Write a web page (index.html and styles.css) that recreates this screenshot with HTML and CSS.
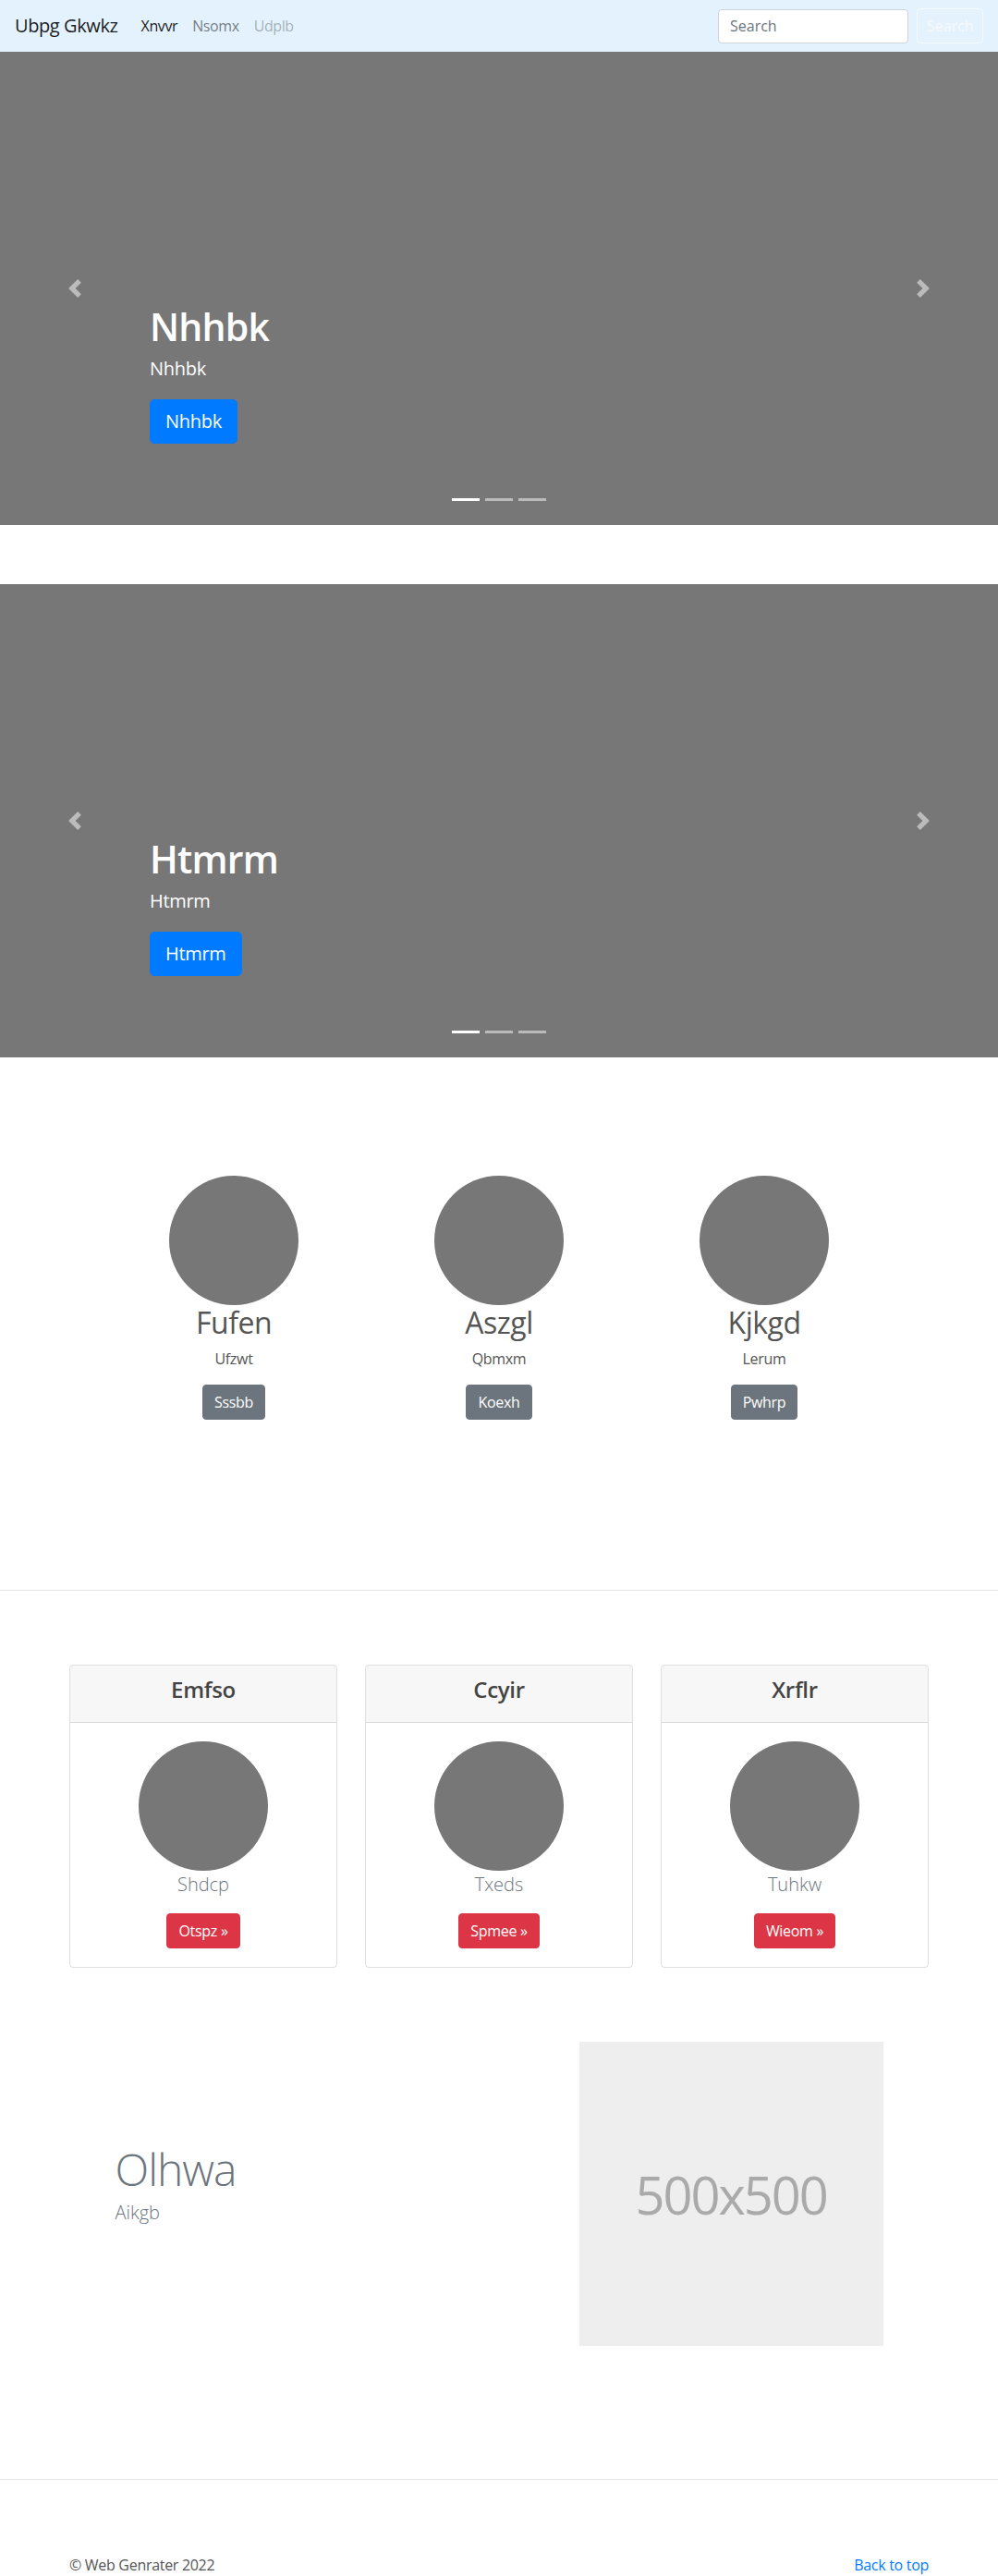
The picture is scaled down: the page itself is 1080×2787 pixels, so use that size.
FILE: index.html
```html
<!DOCTYPE html>
<html lang="en">
<head>
<meta charset="utf-8">
<title>Ubpg Gkwkz</title>
<link rel="stylesheet" href="styles.css">
</head>
<body>
<nav class="navbar">
  <a class="brand" href="#">Ubpg Gkwkz</a>
  <ul class="nav">
    <li><a class="nav-link active" href="#">Xnvvr</a></li>
    <li><a class="nav-link" href="#">Nsomx</a></li>
    <li><a class="nav-link disabled" href="#">Udplb</a></li>
  </ul>
  <form class="search">
    <input class="search-input" type="text" placeholder="Search">
    <button class="search-btn" type="button">Search</button>
  </form>
</nav>

<div class="carousel carousel-first">
  <div class="caption">
    <h1 class="caption-title">Nhhbk</h1>
    <p class="lead caption-lead">Nhhbk</p>
    <a class="btn btn-lg btn-primary" href="#">Nhhbk</a>
  </div>
  <a class="control control-prev" href="#"><svg viewBox="0 0 8 8" width="20" height="20"><path d="M5.25 0l-4 4 4 4 1.5-1.5-2.5-2.5 2.5-2.5-1.5-1.5z"/></svg></a>
  <a class="control control-next" href="#"><svg viewBox="0 0 8 8" width="20" height="20"><path d="M2.75 0l-1.5 1.5 2.5 2.5-2.5 2.5 1.5 1.5 4-4-4-4z"/></svg></a>
  <ol class="indicators"><li class="active"></li><li></li><li></li></ol>
</div>

<div class="carousel carousel-second">
  <div class="caption">
    <h1 class="caption-title">Htmrm</h1>
    <p class="lead caption-lead">Htmrm</p>
    <a class="btn btn-lg btn-primary" href="#">Htmrm</a>
  </div>
  <a class="control control-prev" href="#"><svg viewBox="0 0 8 8" width="20" height="20"><path d="M5.25 0l-4 4 4 4 1.5-1.5-2.5-2.5 2.5-2.5-1.5-1.5z"/></svg></a>
  <a class="control control-next" href="#"><svg viewBox="0 0 8 8" width="20" height="20"><path d="M2.75 0l-1.5 1.5 2.5 2.5-2.5 2.5 1.5 1.5 4-4-4-4z"/></svg></a>
  <ol class="indicators"><li class="active"></li><li></li><li></li></ol>
</div>

<section class="marketing">
  <div class="marketing-col">
    <div class="avatar"></div>
    <h2 class="marketing-title">Fufen</h2>
    <p class="marketing-text">Ufzwt</p>
    <a class="btn btn-secondary" href="#">Sssbb</a>
  </div>
  <div class="marketing-col">
    <div class="avatar"></div>
    <h2 class="marketing-title">Aszgl</h2>
    <p class="marketing-text">Qbmxm</p>
    <a class="btn btn-secondary" href="#">Koexh</a>
  </div>
  <div class="marketing-col">
    <div class="avatar"></div>
    <h2 class="marketing-title">Kjkgd</h2>
    <p class="marketing-text">Lerum</p>
    <a class="btn btn-secondary" href="#">Pwhrp</a>
  </div>
</section>

<hr class="divider divider-top">

<section class="cards">
  <div class="card">
    <div class="card-header"><h4 class="card-title">Emfso</h4></div>
    <div class="card-body">
      <div class="avatar"></div>
      <p class="lead card-lead">Shdcp</p>
      <a class="btn btn-danger" href="#">Otspz &raquo;</a>
    </div>
  </div>
  <div class="card">
    <div class="card-header"><h4 class="card-title">Ccyir</h4></div>
    <div class="card-body">
      <div class="avatar"></div>
      <p class="lead card-lead">Txeds</p>
      <a class="btn btn-danger" href="#">Spmee &raquo;</a>
    </div>
  </div>
  <div class="card">
    <div class="card-header"><h4 class="card-title">Xrflr</h4></div>
    <div class="card-body">
      <div class="avatar"></div>
      <p class="lead card-lead">Tuhkw</p>
      <a class="btn btn-danger" href="#">Wieom &raquo;</a>
    </div>
  </div>
</section>

<section class="featurette">
  <div class="featurette-text">
    <h2 class="featurette-heading">Olhwa</h2>
    <p class="lead featurette-lead">Aikgb</p>
  </div>
  <div class="featurette-media">
    <div class="placeholder"><span>500x500</span></div>
  </div>
</section>

<hr class="divider divider-bottom">

<footer class="footer">
  <p class="copyright">&copy; Web Genrater 2022</p>
  <p class="back"><a href="#">Back to top</a></p>
</footer>
</body>
</html>
```

FILE: styles.css
```css
* { box-sizing: border-box; }

html, body {
  margin: 0;
  padding: 0;
}

body {
  font-family: "Open Sans", "Noto Sans", sans-serif;
  font-size: 16px;
  line-height: 1.5;
  color: #212529;
  background: #fff;
}

a { text-decoration: none; }

/* Navbar */
.navbar {
  display: flex;
  align-items: center;
  height: 56px;
  padding: 0 16px;
  background: #e3f2fd;
}

.brand {
  font-size: 20px;
  line-height: 30px;
  color: rgba(0, 0, 0, 0.9);
  margin-right: 17px;
  letter-spacing: -0.4px;
}

.nav {
  display: flex;
  list-style: none;
  margin: 0;
  padding: 0;
}

.nav-link {
  display: block;
  padding: 8px 8px;
  font-size: 16px;
  letter-spacing: -0.4px;
  color: rgba(0, 0, 0, 0.5);
}

.nav-link.active { color: rgba(0, 0, 0, 0.9); }
.nav-link.disabled { color: rgba(0, 0, 0, 0.3); }

.search {
  margin-left: auto;
  display: flex;
  align-items: center;
  gap: 9px;
}

.search-input {
  width: 206px;
  height: 37px;
  padding: 6px 12px;
  font-family: inherit;
  font-size: 16px;
  color: #495057;
  background: #fff;
  border: 1px solid #ced4da;
  border-radius: 4px;
}

.search-input::placeholder { color: #6c757d; }

.search-btn {
  width: 72px;
  height: 38px;
  padding: 6px 10px;
  font-family: inherit;
  font-size: 16px;
  color: #f8f9fa;
  background: transparent;
  border: 1px solid #f8f9fa;
  border-radius: 4px;
}

/* Carousel */
.carousel {
  position: relative;
  height: 512px;
  background: #777;
  display: flex;
  flex-direction: column;
  justify-content: flex-end;
  padding: 0 162px 88px;
}

.carousel-first { margin-bottom: 64px; }
.carousel-second { margin-bottom: 128px; }

.caption {
  display: flex;
  flex-direction: column;
  align-items: flex-start;
  color: #fff;
}

.caption-title {
  margin: 0 0 5px;
  font-size: 41px;
  line-height: 52px;
  font-weight: 600;
  letter-spacing: -0.8px;
}

.caption-lead {
  margin: 0 0 18px;
}

.lead {
  font-size: 20px;
  line-height: 30px;
  font-weight: 300;
}

.caption-lead { font-weight: 400; letter-spacing: -0.3px; }

.control {
  position: absolute;
  top: 0;
  bottom: 0;
  width: 15%;
  display: flex;
  align-items: center;
  justify-content: center;
  opacity: 0.5;
}

.control svg { fill: #fff; display: block; }
.control-prev { left: 0; }
.control-next { right: 0; }

.indicators {
  position: absolute;
  left: 0;
  right: 0;
  bottom: 0;
  margin: 0 0 16px;
  padding: 0;
  list-style: none;
  display: flex;
  justify-content: center;
}

.indicators li {
  width: 30px;
  height: 23px;
  margin: 0 3px;
  border-top: 10px solid transparent;
  border-bottom: 10px solid transparent;
  background: #fff;
  background-clip: padding-box;
  opacity: 0.5;
}

.indicators li.active { opacity: 1; }

/* Buttons */
.btn {
  display: inline-block;
  padding: 6px 12px;
  font-size: 16px;
  line-height: 24px;
  border: 1px solid transparent;
  border-radius: 4px;
  color: #fff;
  letter-spacing: -0.3px;
}

.btn-lg {
  padding: 8px 16px;
  font-size: 20px;
  line-height: 30px;
  border-radius: 5px;
}

.btn-primary { background: #007bff; border-color: #007bff; }
.btn-secondary { background: #6c757d; border-color: #6c757d; }
.btn-danger { background: #dc3545; border-color: #dc3545; }

/* Marketing */
.marketing {
  width: 861px;
  margin: 0 auto;
  display: grid;
  grid-template-columns: repeat(3, 1fr);
  padding-bottom: 184px;
}

.marketing-col {
  display: flex;
  flex-direction: column;
  align-items: center;
  text-align: center;
}

.avatar {
  width: 140px;
  height: 140px;
  border-radius: 50%;
  background: #777;
  flex: none;
}

.marketing-title {
  margin: 0 0 8px;
  font-size: 32px;
  line-height: 1.2;
  font-weight: 400;
  color: #555;
  letter-spacing: -0.5px;
}

.marketing-text {
  margin: 0 0 16px;
  color: #555;
  letter-spacing: -0.3px;
}

/* Dividers */
.divider {
  margin: 0;
  border: 0;
  border-top: 1px solid rgba(0, 0, 0, 0.1);
}

/* Cards */
.cards {
  width: 960px;
  margin: 80px auto 0;
  padding: 0 15px;
  display: grid;
  grid-template-columns: repeat(3, 1fr);
  gap: 30px;
}

.card {
  border: 1px solid rgba(0, 0, 0, 0.125);
  border-radius: 4px;
  overflow: hidden;
  display: flex;
  flex-direction: column;
}

.card-header {
  padding: 12px 20px;
  background: rgba(0, 0, 0, 0.03);
  border-bottom: 1px solid rgba(0, 0, 0, 0.125);
  text-align: center;
}

.card-title {
  margin: 0 0 8px;
  font-size: 24px;
  line-height: 1.2;
  font-weight: 600;
  color: #444;
  letter-spacing: -0.3px;
}

.card-body {
  padding: 20px;
  display: flex;
  flex-direction: column;
  align-items: center;
}

.card-lead {
  margin: 0 0 16px;
  color: #6c757d;
}

/* Featurette */
.featurette {
  width: 861px;
  margin: 80px auto 144px;
  display: grid;
  grid-template-columns: 7fr 5fr;
  align-items: center;
}

.featurette-text { padding: 0 15px; }

.featurette-heading {
  margin: 0 0 8px;
  font-size: 48px;
  line-height: 1;
  font-weight: 300;
  letter-spacing: -1px;
  color: #6c757d;
}

.featurette-lead {
  margin: 0 0 16px;
  color: #6c757d;
}

.featurette-media { padding: 0 15px; }

.placeholder {
  width: 100%;
  aspect-ratio: 1 / 1;
  background: #eee;
  display: flex;
  align-items: center;
  justify-content: center;
}

.placeholder span {
  font-size: 56px;
  color: #aaa;
  letter-spacing: -2px;
}

/* Footer */
.footer {
  width: 960px;
  margin: 80px auto 0;
  padding: 0 15px;
  display: flex;
  justify-content: space-between;
}

.footer p {
  margin: 0;
  line-height: 24px;
}

.copyright { color: #555; letter-spacing: -0.3px; }
.back a { color: #007bff; letter-spacing: -0.3px; }
```
